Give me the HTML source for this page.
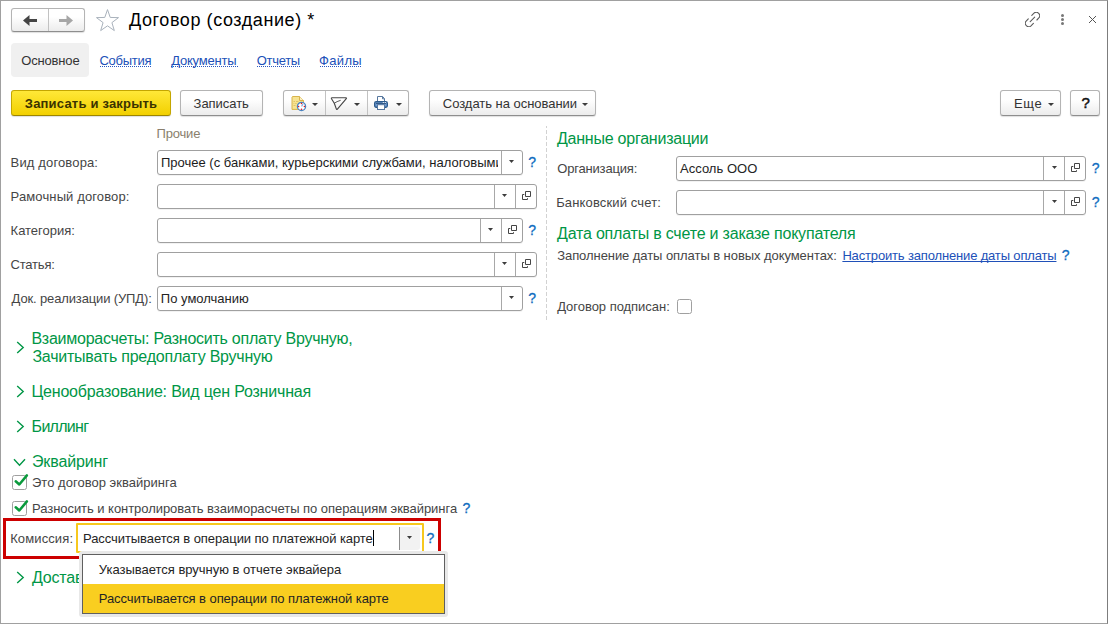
<!DOCTYPE html>
<html lang="ru">
<head>
<meta charset="utf-8">
<title>Договор (создание) *</title>
<style>
html,body{margin:0;padding:0;}
body{width:1108px;height:624px;position:relative;overflow:hidden;background:#fff;
 font-family:"Liberation Sans",sans-serif;font-size:13px;color:#333;}
#frame{position:absolute;left:0;top:0;width:1106px;height:622px;border:1px solid #a0a0a0;border-right-color:#7d7d7d;}
.a{position:absolute;white-space:nowrap;}
.dotl{position:absolute;height:1px;background:repeating-linear-gradient(90deg,#2a58c2 0 1px,transparent 1px 2px);}
.ul{text-decoration:underline;text-underline-offset:1px;text-decoration-skip-ink:none;}
.q{position:absolute;white-space:nowrap;line-height:16px;color:#0f6cc0;font-size:14px;-webkit-text-stroke:.3px #0f6cc0;}
.f{position:absolute;height:23px;border:1px solid #a0a0a0;border-radius:3px;background:#fff;box-shadow:0 1px 0 rgba(0,0,0,.05);}
.f i{position:absolute;top:0;width:1px;height:23px;background:#a8a8a8;}
.clip{position:absolute;left:3px;top:4px;height:16px;line-height:16px;overflow:hidden;white-space:nowrap;color:#1c1c1c;}
.btn{position:absolute;height:26px;border:1px solid #b4b4b4;border-bottom-color:#8e8e8e;border-radius:3px;box-sizing:border-box;
 background:linear-gradient(#ffffff 35%,#ececec);box-shadow:0 1px 1px rgba(0,0,0,.13);}
.sep{position:absolute;width:1px;background:#c2c2c2;}
.arr{position:absolute;width:0;height:0;border-left:3px solid transparent;border-right:3px solid transparent;border-top:3px solid #3c3c3c;}
.ar5{position:absolute;width:5px;height:3px;background:#3c3c3c;clip-path:polygon(0 0,100% 0,50% 100%);}
.cb{position:absolute;width:13px;height:13px;border:1px solid #a0a0a0;border-radius:2.5px;background:#fff;}
</style>
</head>
<body>
<div id="frame"></div>

<!-- header -->
<div class="btn" style="left:11px;top:8px;width:74px;height:24px;"></div>
<div class="sep" style="left:48px;top:9px;height:22px;"></div>
<svg class="a" style="left:20px;top:12px" width="56" height="17" viewBox="0 0 56 17"><path d="M3 8.500L9.500 3v4h7.500v3h-7.500v4z" fill="#454545"/><path d="M53 8.500L46.500 3v4h-7.500v3h7.500v4z" fill="#a6a6a6"/></svg>
<svg class="a" style="left:95px;top:8px" width="25" height="25" viewBox="0 0 25 25"><path d="M12.50 1.60L15.23 9.45L23.53 9.62L16.91 14.63L19.32 22.58L12.50 17.84L5.68 22.58L8.09 14.63L1.47 9.62L9.77 9.45Z" fill="#fff" stroke="#a9b2bc" stroke-width="1"/></svg>
<svg class="a" style="left:1025px;top:12px" width="15" height="15" viewBox="0 0 15 15"><g fill="none" stroke="#5a5a5a" stroke-width="1.100" stroke-linecap="round"><path d="M6.800 3.300L9 1.200A3.400 3.400 0 0 1 13.800 6L11.900 8"/><path d="M8.400 11.400L6 13.800A3.400 3.400 0 0 1 1.200 9L3.300 6.800"/><path d="M5.200 9.600L9.700 5.200"/></g></svg>
<svg class="a" style="left:1060px;top:13px" width="5" height="13" viewBox="0 0 5 13"><g fill="#777"><circle cx="2.500" cy="2.400" r="1.500"/><circle cx="2.500" cy="6.500" r="1.500"/><circle cx="2.500" cy="10.600" r="1.500"/></g></svg>
<svg class="a" style="left:1088px;top:15px" width="9" height="9" viewBox="0 0 9 9"><path d="M1 1l7 7M8 1l-7 7" stroke="#555" stroke-width="1" fill="none"/></svg>

<!-- tabs -->
<div class="a" style="left:11px;top:43px;width:78px;height:34px;background:#f0f0f0;border-radius:4px;"></div>

<!-- toolbar -->
<div class="btn" style="left:11px;top:90px;width:160px;background:linear-gradient(#ffe838,#f2d000);border-color:#c4a600;border-bottom-color:#9c8500;"></div>
<div class="btn" style="left:180px;top:90px;width:83px;"></div>
<div class="btn" style="left:283px;top:90px;width:126px;"></div>
<div class="sep" style="left:325px;top:91px;height:24px;"></div>
<div class="sep" style="left:367px;top:91px;height:24px;"></div>
<div class="btn" style="left:429px;top:90px;width:167px;"></div>
<div class="btn" style="left:1000px;top:90px;width:61px;"></div>
<div class="btn" style="left:1070px;top:90px;width:30px;"></div>
<svg class="a" style="left:290px;top:95px" width="18" height="17" viewBox="0 0 18 17"><path d="M2.500 1.500h7l4 4v8.900h-11.500v-12.400z" fill="#f7e391" stroke="#d8b44c" stroke-width="1" stroke-linejoin="round"/><path d="M9.500 1.500v4h4" fill="#fbf0c4" stroke="#d8b44c" stroke-width="1" stroke-linejoin="round"/><path d="M3.500 6.500h1.500M6 6.500h2.500M3.500 8.500h.800M5.200 8.500h1.500M3.500 10.500h2" stroke="#dfc566" stroke-width="1"/><circle cx="11.500" cy="11.400" r="4.100" fill="#fff" stroke="#4b84c0" stroke-width="1.300"/><path d="M11.500 11.400l1.500-2.200" stroke="#8aa8dc" stroke-width="1.200"/><g fill="#e61919"><circle cx="11.500" cy="8.500" r=".750"/><circle cx="11.500" cy="14.300" r=".750"/><circle cx="8.600" cy="11.400" r=".750"/><circle cx="14.400" cy="11.400" r=".750"/></g></svg>
<svg class="a" style="left:330px;top:96px" width="18" height="15" viewBox="0 0 18 15"><g fill="none" stroke="#474747" stroke-width="1.150" stroke-linejoin="round" stroke-linecap="round"><path d="M2 1.700H15.800Q16.900 1.800 16.300 2.700L7.200 13.300Q6.600 13.700 6.300 12.900L4.300 7.200L1.500 2.800Q1.100 1.800 2 1.700Z"/><path d="M4.300 7.200Q6.800 5.400 10.300 4.400" stroke-width=".9"/></g></svg>
<svg class="a" style="left:373px;top:95px" width="16" height="16" viewBox="0 0 16 16"><path d="M4.500 6.500V1.500H9.600L11.500 3.700V6.500" fill="#fff" stroke="#56779e" stroke-width="1"/><path d="M9.500 1.500V3.800H11.500" fill="none" stroke="#56779e" stroke-width="1"/><rect x="1.650" y="6.650" width="12.700" height="5.600" rx="1.500" fill="#6f9bd2" stroke="#2b5a8c" stroke-width="1.300"/><path d="M3 8.300H13" stroke="#234a75" stroke-width="1"/><rect x="4.500" y="9.700" width="7" height="4.800" fill="#fff" stroke="#56779e" stroke-width="1"/><rect x="9.800" y="7" width="1" height="1" fill="#fff"/><rect x="11.800" y="7" width="1" height="1" fill="#fff"/></svg>
<div class="arr" style="left:312px;top:103px;"></div>
<div class="arr" style="left:354px;top:103px;"></div>
<div class="arr" style="left:396px;top:103px;"></div>
<div class="arr" style="left:582px;top:103px;"></div>
<div class="arr" style="left:1048px;top:103px;"></div>

<!-- left column -->
<div class="f" style="left:157px;top:150px;width:364px;"><i style="left:343px"></i><div class="clip" style="width:337px;"><span style="letter-spacing:0px">Прочее (с банками, курьерскими службами, налоговыми</span></div></div>
<div class="ar5" style="left:509px;top:160px;"></div>
<div class="f" style="left:157px;top:184px;width:378px;"><i style="left:336px"></i><i style="left:357px"></i></div>
<div class="ar5" style="left:502px;top:194px;"></div>
<svg class="a" style="left:522px;top:191px" width="10" height="10" viewBox="0 0 10 10"><path d="M3.500 .500h5v5h-5z M2.300 3.500H.500V8.500H5.500V7.200" fill="none" stroke="#454545" stroke-width="1"/></svg>
<div class="f" style="left:157px;top:218px;width:364px;"><i style="left:322px"></i><i style="left:343px"></i></div>
<div class="ar5" style="left:488px;top:228px;"></div>
<svg class="a" style="left:508px;top:225px" width="10" height="10" viewBox="0 0 10 10"><path d="M3.500 .500h5v5h-5z M2.300 3.500H.500V8.500H5.500V7.200" fill="none" stroke="#454545" stroke-width="1"/></svg>
<div class="f" style="left:157px;top:252px;width:378px;"><i style="left:336px"></i><i style="left:357px"></i></div>
<div class="ar5" style="left:502px;top:262px;"></div>
<svg class="a" style="left:522px;top:259px" width="10" height="10" viewBox="0 0 10 10"><path d="M3.500 .500h5v5h-5z M2.300 3.500H.500V8.500H5.500V7.200" fill="none" stroke="#454545" stroke-width="1"/></svg>
<div class="f" style="left:157px;top:286px;width:364px;"><i style="left:343px"></i></div>
<div class="ar5" style="left:509px;top:296px;"></div>
<div class="a" style="left:546px;top:126px;width:1px;height:194px;background:repeating-linear-gradient(180deg,#d2d2d2 0 4px,transparent 4px 6px);background-position:0 -2px;"></div>

<!-- right column -->
<div class="f" style="left:676px;top:156px;width:408px;"><i style="left:366px"></i><i style="left:387px"></i></div>
<div class="ar5" style="left:1052px;top:166px;"></div>
<svg class="a" style="left:1071px;top:163px" width="10" height="10" viewBox="0 0 10 10"><path d="M3.500 .500h5v5h-5z M2.300 3.500H.500V8.500H5.500V7.200" fill="none" stroke="#454545" stroke-width="1"/></svg>
<div class="f" style="left:676px;top:190px;width:408px;"><i style="left:366px"></i><i style="left:387px"></i></div>
<div class="ar5" style="left:1052px;top:200px;"></div>
<svg class="a" style="left:1071px;top:197px" width="10" height="10" viewBox="0 0 10 10"><path d="M3.500 .500h5v5h-5z M2.300 3.500H.500V8.500H5.500V7.200" fill="none" stroke="#454545" stroke-width="1"/></svg>
<div class="cb" style="left:677px;top:299px;"></div>

<!-- groups -->
<svg class="a" style="left:16px;top:341px" width="9" height="13" viewBox="0 0 9 13"><path d="M1.200 1L7.200 6.500L1.200 12" fill="none" stroke="#009646" stroke-width="1.400"/></svg>
<svg class="a" style="left:16px;top:385px" width="9" height="13" viewBox="0 0 9 13"><path d="M1.200 1L7.200 6.500L1.200 12" fill="none" stroke="#009646" stroke-width="1.400"/></svg>
<svg class="a" style="left:16px;top:420px" width="9" height="13" viewBox="0 0 9 13"><path d="M1.200 1L7.200 6.500L1.200 12" fill="none" stroke="#009646" stroke-width="1.400"/></svg>
<svg class="a" style="left:13px;top:457.5px" width="13" height="9" viewBox="0 0 13 9"><path d="M1 1.200L6.500 7.200L12 1.200" fill="none" stroke="#009646" stroke-width="1.400"/></svg>
<svg class="a" style="left:16px;top:571px" width="9" height="13" viewBox="0 0 9 13"><path d="M1.200 1L7.200 6.500L1.200 12" fill="none" stroke="#009646" stroke-width="1.400"/></svg>
<div class="cb" style="left:12px;top:475px;"></div>
<svg class="a" style="left:13px;top:473px" width="16" height="15" viewBox="0 0 16 15"><path d="M2.700 8.300L6.300 11.500L13.900 2.400" fill="none" stroke="#0a9a3c" stroke-width="2.500" stroke-linecap="round" stroke-linejoin="round"/></svg>
<div class="cb" style="left:12px;top:501px;"></div>
<svg class="a" style="left:13px;top:499px" width="16" height="15" viewBox="0 0 16 15"><path d="M2.700 8.300L6.300 11.500L13.900 2.400" fill="none" stroke="#0a9a3c" stroke-width="2.500" stroke-linecap="round" stroke-linejoin="round"/></svg>

<!-- commission row -->
<div class="a" style="left:3px;top:518px;width:432px;height:35px;border:3px solid #cc0000;"></div>
<div class="a" style="left:76px;top:523px;width:344px;height:26px;border:2px solid #f7c81e;background:#fff;border-radius:1px;"></div>
<div class="a" style="left:399px;top:527px;width:21px;height:23px;background:#f2f2f2;border-left:1px solid #8c8c8c;border-radius:0 3px 3px 0;box-sizing:border-box;"></div>
<div class="ar5" style="left:407px;top:536px;"></div>
<div class="a" style="left:373px;top:530px;width:1px;height:16px;background:#000;"></div>

<!-- dropdown list -->
<div class="a" style="left:79px;top:551px;width:369px;height:66px;background:#e8e8e8;border-radius:3px;z-index:4;"></div>
<div class="a" style="left:82px;top:554px;width:361px;height:58px;border:1px solid #5f5f5f;background:#fff;z-index:4;"></div>
<div class="a" style="left:83px;top:584px;width:361px;height:29px;background:#f9ce20;z-index:4;"></div>

<!-- text -->
<div class="a x" id="title" style="left:129px;top:9px;font-size:18px;line-height:22px;color:#000;letter-spacing:0.579px;">Договор (создание) *</div>
<div class="a x" id="tab0" style="left:21.2px;top:53px;font-size:13px;line-height:16px;color:#333;letter-spacing:-0.157px;">Основное</div>
<div class="dotl" style="left:100px;top:66px;width:52px;"></div>
<div class="a x" id="tab1" style="left:99.4px;top:53px;font-size:13px;line-height:16px;color:#2050b8;letter-spacing:-0.266px;">События</div>
<div class="dotl" style="left:171px;top:66px;width:67px;"></div>
<div class="a x" id="tab2" style="left:171.2px;top:53px;font-size:13px;line-height:16px;color:#2050b8;letter-spacing:-0.200px;">Документы</div>
<div class="dotl" style="left:257px;top:66px;width:44px;"></div>
<div class="a x" id="tab3" style="left:256.8px;top:53px;font-size:13px;line-height:16px;color:#2050b8;letter-spacing:-0.320px;">Отчеты</div>
<div class="dotl" style="left:320px;top:66px;width:42px;"></div>
<div class="a x" id="tab4" style="left:319px;top:53px;font-size:13px;line-height:16px;color:#2050b8;letter-spacing:0.350px;">Файлы</div>
<div class="a x" id="b1" style="left:24.8px;top:96px;font-size:13px;line-height:16px;color:#3b3200;font-weight:700;letter-spacing:0.200px;">Записать и закрыть</div>
<div class="a x" id="b2" style="left:193.6px;top:96px;font-size:13px;line-height:16px;color:#333;letter-spacing:-0.042px;">Записать</div>
<div class="a x" id="b3" style="left:442.8px;top:96px;font-size:13px;line-height:16px;color:#333;letter-spacing:-0.033px;">Создать на основании</div>
<div class="a x" id="b4" style="left:1014.0px;top:96px;font-size:13px;line-height:16px;color:#333;letter-spacing:0.650px;">Еще</div>
<div class="a x" id="b5" style="left:1081.4px;top:94px;font-size:15px;line-height:18px;color:#111;-webkit-text-stroke:.5px #111;">?</div>
<div class="a x" id="pro" style="left:156.6px;top:126px;font-size:13px;line-height:16px;color:#8a7f6d;letter-spacing:-0.200px;">Прочие</div>
<div class="a x" id="l1" style="left:10.6px;top:155px;font-size:13px;line-height:16px;color:#454545;letter-spacing:0.141px;">Вид договора:</div>
<div class="a x" id="l2" style="left:10.6px;top:189px;font-size:13px;line-height:16px;color:#454545;letter-spacing:0.124px;">Рамочный договор:</div>
<div class="a x" id="l3" style="left:10.6px;top:223px;font-size:13px;line-height:16px;color:#454545;letter-spacing:-0.021px;">Категория:</div>
<div class="a x" id="l4" style="left:10.6px;top:257px;font-size:13px;line-height:16px;color:#454545;letter-spacing:-0.217px;">Статья:</div>
<div class="a x" id="l5" style="left:11.6px;top:291px;font-size:13px;line-height:16px;color:#454545;letter-spacing:-0.138px;">Док. реализации (УПД):</div>
<div class="a x" id="v5" style="left:160.8px;top:291px;font-size:13px;line-height:16px;color:#242424;letter-spacing:0.010px;">По умолчанию</div>
<div class="a x" id="g1" style="left:557px;top:130px;font-size:16px;line-height:18px;color:#009646;letter-spacing:-0.235px;">Данные организации</div>
<div class="a x" id="r1" style="left:557.2px;top:161px;font-size:13px;line-height:16px;color:#454545;letter-spacing:-0.172px;">Организация:</div>
<div class="a x" id="r2" style="left:556.2px;top:195px;font-size:13px;line-height:16px;color:#454545;letter-spacing:0.140px;">Банковский счет:</div>
<div class="a x" id="rv1" style="left:680px;top:161px;font-size:13px;line-height:16px;color:#242424;letter-spacing:0.021px;">Ассоль ООО</div>
<div class="a x" id="g2" style="left:557px;top:225px;font-size:16px;line-height:18px;color:#009646;letter-spacing:-0.199px;">Дата оплаты в счете и заказе покупателя</div>
<div class="a x" id="r3" style="left:557.2px;top:248px;font-size:13px;line-height:16px;color:#454545;letter-spacing:-0.064px;">Заполнение даты оплаты в новых документах:</div>
<div class="a x" id="r4" style="left:842.4px;top:248px;font-size:13px;line-height:16px;color:#2050b8;letter-spacing:-0.158px;"><span class="ul">Настроить заполнение даты оплаты</span></div>
<div class="a x" id="r5" style="left:557.2px;top:299px;font-size:13px;line-height:16px;color:#454545;letter-spacing:-0.032px;">Договор подписан:</div>
<div class="a x" id="g3a" style="left:31.4px;top:330px;font-size:16px;line-height:18px;color:#009646;letter-spacing:-0.251px;">Взаиморасчеты: Разносить оплату Вручную,</div>
<div class="a x" id="g3b" style="left:32.4px;top:348px;font-size:16px;line-height:18px;color:#009646;letter-spacing:-0.222px;">Зачитывать предоплату Вручную</div>
<div class="a x" id="g4" style="left:31.4px;top:383px;font-size:16px;line-height:18px;color:#009646;letter-spacing:-0.191px;">Ценообразование: Вид цен Розничная</div>
<div class="a x" id="g5" style="left:31.6px;top:418px;font-size:16px;line-height:18px;color:#009646;letter-spacing:-0.717px;">Биллинг</div>
<div class="a x" id="g6" style="left:32.0px;top:453px;font-size:16px;line-height:18px;color:#009646;letter-spacing:-0.139px;">Эквайринг</div>
<div class="a x" id="g7" style="left:32.0px;top:569px;font-size:16px;line-height:18px;color:#009646;letter-spacing:-0.200px;">Доставка</div>
<div class="a x" id="c1" style="left:32px;top:475px;font-size:13px;line-height:16px;color:#454545;letter-spacing:0.024px;">Это договор эквайринга</div>
<div class="a x" id="c2" style="left:32px;top:501px;font-size:13px;line-height:16px;color:#454545;letter-spacing:-0.048px;">Разносить и контролировать взаиморасчеты по операциям эквайринга</div>
<div class="a x" id="k1" style="left:10.2px;top:531px;font-size:13px;line-height:16px;color:#454545;letter-spacing:0.111px;">Комиссия:</div>
<div class="a x" id="k2" style="left:83px;top:531px;font-size:13px;line-height:16px;color:#242424;letter-spacing:-0.074px;">Рассчитывается в операции по платежной карте</div>
<div class="a x" id="d1" style="left:98.8px;top:562px;font-size:13px;line-height:16px;color:#242424;letter-spacing:-0.014px;z-index:5;">Указывается вручную в отчете эквайера</div>
<div class="a x" id="d2" style="left:98.8px;top:591px;font-size:13px;line-height:16px;color:#242424;letter-spacing:-0.072px;z-index:5;">Рассчитывается в операции по платежной карте</div>
<div class="q x" id="q0" style="left:528.2px;top:154px;">?</div>
<div class="q x" id="q1" style="left:528.2px;top:222px;">?</div>
<div class="q x" id="q2" style="left:528.2px;top:290px;">?</div>
<div class="q x" id="q3" style="left:1091.8px;top:160px;">?</div>
<div class="q x" id="q4" style="left:1091.8px;top:194px;">?</div>
<div class="q x" id="q5" style="left:1061.8px;top:247px;">?</div>
<div class="q x" id="q6" style="left:462.5px;top:500px;">?</div>
<div class="q x" id="q7" style="left:426.5px;top:530px;">?</div>

</body>
</html>
